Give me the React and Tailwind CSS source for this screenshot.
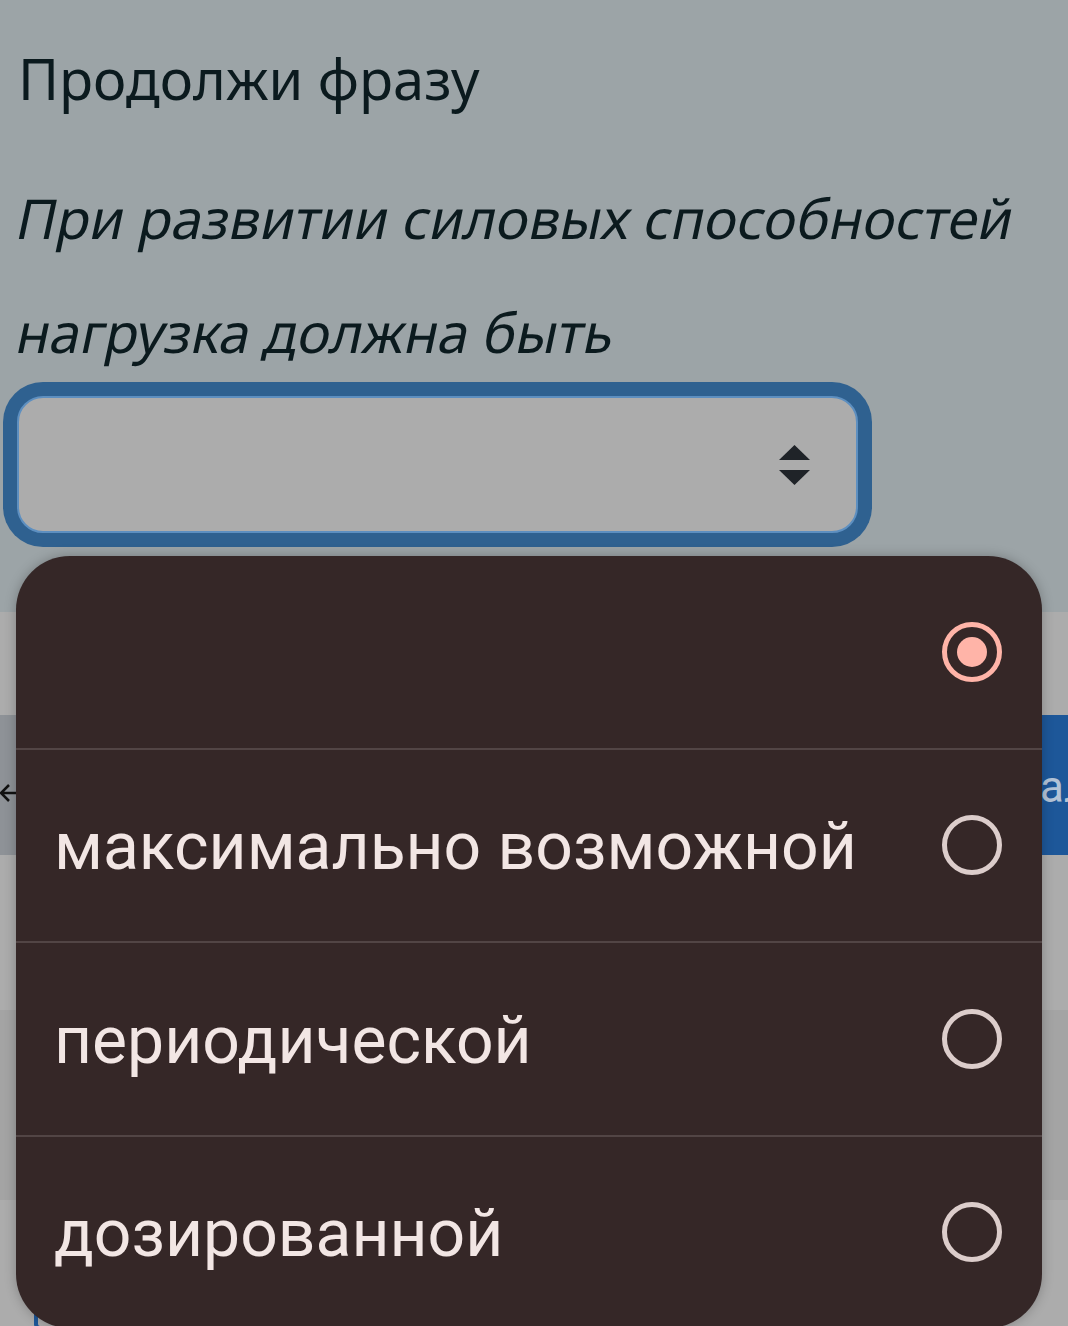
import React from 'react';

const options = ['', 'максимально возможной', 'периодической', 'дозированной'];

const Radio = ({ checked }) =>
  checked ? (
    <span className="flex items-center justify-center w-[60px] h-[60px] rounded-full border-[5px] border-[#ffb4a8]">
      <span className="w-[30px] h-[30px] rounded-full bg-[#ffb4a8]" />
    </span>
  ) : (
    <span className="w-[60px] h-[60px] rounded-full border-[5px] border-[#dccdcb]" />
  );

const App = () => {
  return (
    <div className="relative w-full h-[1326px] overflow-hidden bg-[#acacac]">
      {/* страница под затемнением */}
      <section className="bg-[#9ca4a7] h-[612px] px-[18px] pt-[44px] text-[#0b1a1e]" style={{ fontFamily: '"Noto Sans", sans-serif' }}>
        <h2 className="text-[56px] leading-[68px]">Продолжи фразу</h2>
        <div className="mt-[49px] text-[55px] leading-[114px]">
          <div className="-skew-x-12 whitespace-nowrap">При развитии силовых способностей</div>
          <div className="-skew-x-12 whitespace-nowrap">нагрузка должна быть</div>
        </div>
        <div className="-ml-[15px] -mt-[7px] w-[869px] h-[165px] rounded-[40px] bg-[#2f6190] p-[14px]">
          <div className="h-full rounded-[26px] border-2 border-[#5d8fc0] bg-[#acacac] flex items-center justify-end pr-[46px]">
            <svg width="31" height="40" viewBox="0 0 31 40">
              <path d="M15.5 0 L31 15 L0 15 Z" fill="#1f2328" />
              <path d="M15.5 40 L31 25 L0 25 Z" fill="#1f2328" />
            </svg>
          </div>
        </div>
      </section>
      <div className="h-[103px]" />
      <div className="h-[140px] flex justify-between" style={{ fontFamily: 'Roboto, sans-serif' }}>
        <div className="w-[320px] bg-[#8e9297] flex items-center">
          <svg width="30" height="20" viewBox="0 0 30 20" className="mt-[16px]">
            <path d="M30 10 H1 M9 2 L1 10 L9 18" stroke="#111" strokeWidth="2.5" fill="none" />
          </svg>
        </div>
        <div className="w-[320px] bg-[#1d5799] flex items-center pl-[259px] whitespace-nowrap text-[#b3c3d6] text-[44px] pt-[4px]">
          Далее
        </div>
      </div>
      <div className="h-[155px]" />
      <div className="h-[190px] bg-[#a4a4a4]" />
      <div className="h-[100px]" />
      <div className="ml-[34px] w-[30px] h-[30px] rounded-[6px] border-[4px] border-[#1d5799]" />

      {/* выпадающий список */}
      <div
        className="absolute left-[16px] top-[556px] w-[1026px] h-[772px] rounded-[54px] bg-[#352727] overflow-hidden shadow-[0_0_12px_rgba(0,0,0,0.25)] flex flex-col"
        style={{ fontFamily: 'Roboto, sans-serif' }}
      >
        {options.map((o, i) => (
          <div
            key={i}
            className={`flex-1 flex items-center justify-between pl-[38px] pr-[40px] ${i > 0 ? 'border-t-2 border-[#524545]' : ''}`}
          >
            <span className="text-[#f2e6e4] text-[66px] leading-none pt-[4px]">{o}</span>
            <Radio checked={i === 0} />
          </div>
        ))}
      </div>
    </div>
  );
};

export default App;
